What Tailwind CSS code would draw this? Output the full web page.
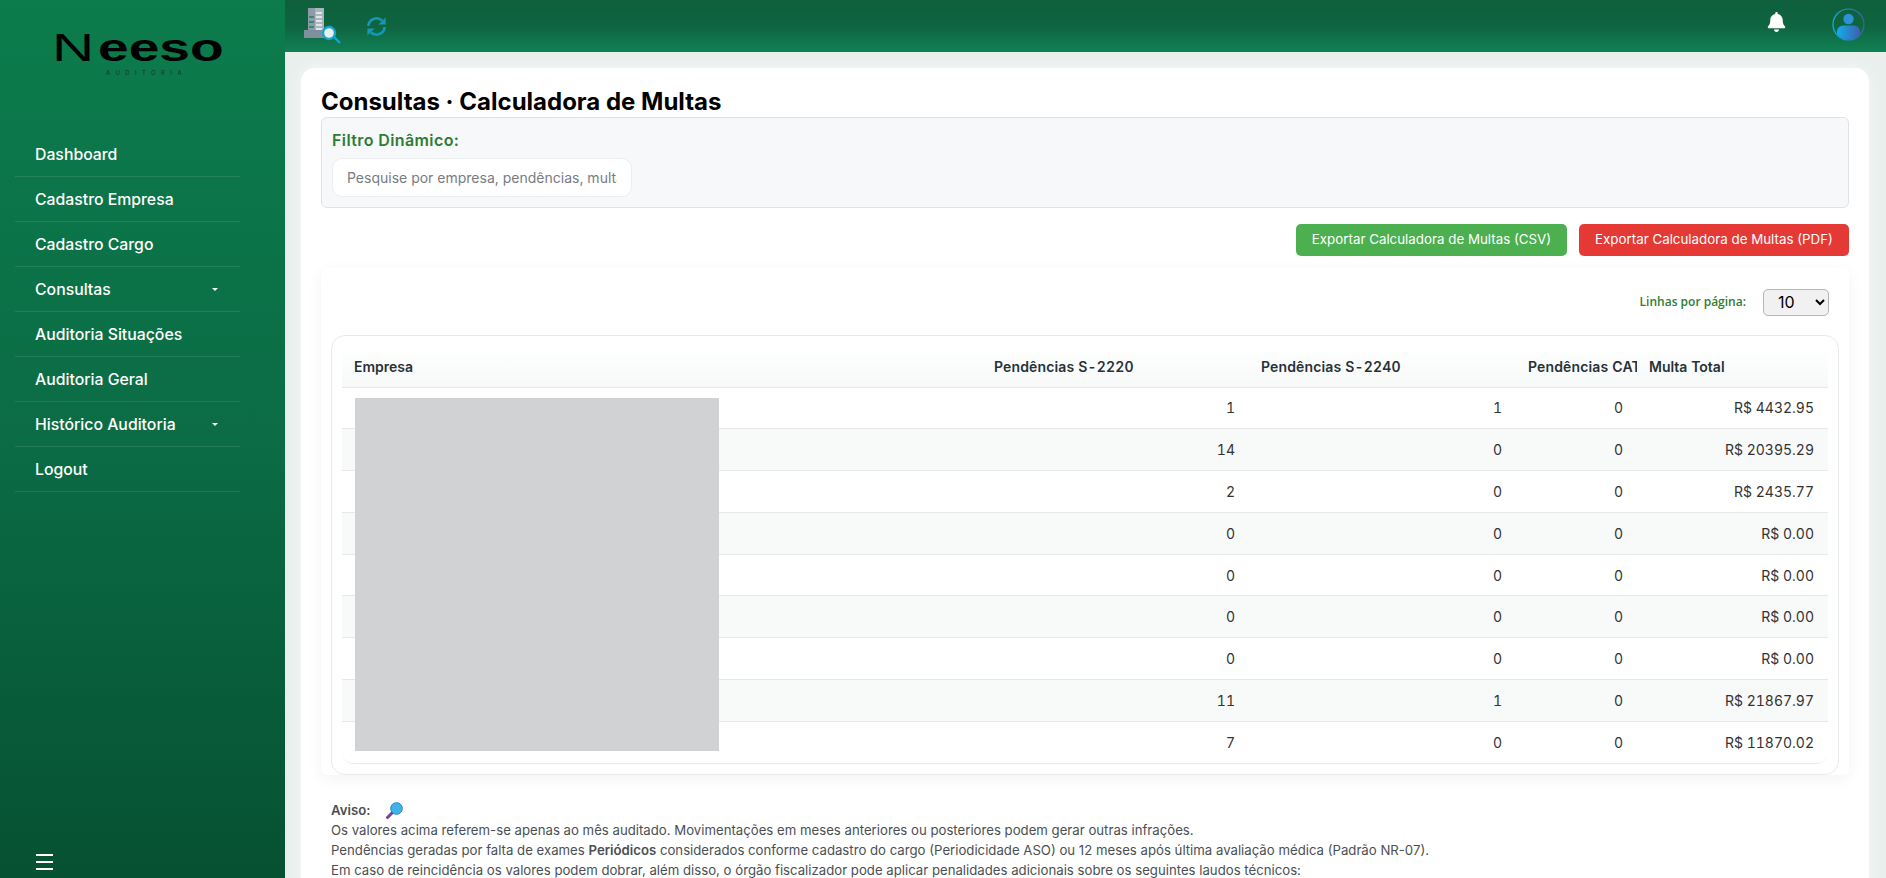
<!DOCTYPE html>
<html lang="pt-BR">
<head>
<meta charset="UTF-8">
<title>Neeso Auditoria</title>
<script src="https://cdn.jsdelivr.net/npm/@tailwindcss/browser@4"></script>
</head>
<body class="h-screen overflow-hidden bg-[#e8efec] font-['Inter',sans-serif]">
<div class="flex h-screen">
  <!-- sidebar -->
  <aside class="flex h-screen w-[285px] shrink-0 flex-col bg-gradient-to-b from-[#0c7c4c] via-[#0b6c45] to-[#065132] text-white">
    <div class="h-[132px] pl-[56px] pt-[34px] text-black">
      <div class="flex h-[28px] items-end font-['Liberation_Sans',sans-serif]">
        <span class="ml-[-4px] block w-[46px] origin-bottom-left scale-x-[1.5] text-[39px] leading-[28px]">N</span>
        <span class="block w-[127px] origin-bottom-left scale-x-[1.45] whitespace-nowrap text-[38px] font-bold leading-[28px]">eeso</span>
      </div>
      <div class="ml-[50px] mt-[7px] whitespace-nowrap text-[6px] leading-[8px] tracking-[5.4px] text-[#16352a]">AUDITORIA</div>
    </div>
    <nav class="flex w-[255px] flex-col px-[15px] text-[15.8px] font-medium">
      <a class="flex h-[45px] items-center border-b border-white/10 pl-[20px] pt-[1px]">Dashboard</a>
      <a class="flex h-[45px] items-center border-b border-white/10 pl-[20px] pt-[1px]">Cadastro Empresa</a>
      <a class="flex h-[45px] items-center border-b border-white/10 pl-[20px] pt-[1px]">Cadastro Cargo</a>
      <a class="flex h-[45px] items-center justify-between border-b border-white/10 pl-[20px] pr-[22px] pt-[1px]">Consultas<span class="border-x-[3px] border-t-[3px] border-x-transparent border-t-white"></span></a>
      <a class="flex h-[45px] items-center border-b border-white/10 pl-[20px] pt-[1px]">Auditoria Situações</a>
      <a class="flex h-[45px] items-center border-b border-white/10 pl-[20px] pt-[1px]">Auditoria Geral</a>
      <a class="flex h-[45px] items-center justify-between border-b border-white/10 pl-[20px] pr-[22px] pt-[1px]">Histórico Auditoria<span class="border-x-[3px] border-t-[3px] border-x-transparent border-t-white"></span></a>
      <a class="flex h-[45px] items-center border-b border-white/10 pl-[20px] pt-[1px]">Logout</a>
    </nav>
    <div class="mt-auto flex h-[24px] flex-col gap-[5px] pl-[36px]">
      <span class="h-[2px] w-[17px] bg-white"></span>
      <span class="h-[2px] w-[17px] bg-white"></span>
      <span class="h-[2px] w-[17px] bg-white"></span>
    </div>
  </aside>

  <div class="flex min-w-0 flex-1 flex-col">
    <!-- topbar -->
    <header class="flex h-[52px] shrink-0 items-center bg-gradient-to-b from-[#0f5f3c] via-[#0e6540] to-[#118056] pl-[19px] pr-[21px]">
      <svg class="h-[36px] w-[37px]" viewBox="0 0 37 36">
        <rect x="4" y="0" width="16" height="30" fill="#8d9ca8"/>
        <rect x="11" y="0" width="9" height="30" fill="#a9b4bd"/>
        <g fill="#dfe5e9"><rect x="12" y="4" width="6" height="2"/><rect x="12" y="8" width="6" height="2"/><rect x="12" y="12" width="6" height="2"/><rect x="12" y="16" width="6" height="2"/><rect x="12" y="20" width="6" height="2"/></g>
        <g fill="#2f8f6a"><rect x="5" y="8" width="5" height="2"/><rect x="5" y="13" width="5" height="2"/><rect x="5" y="18" width="5" height="2"/></g>
        <rect x="0" y="22" width="22" height="8" fill="#7f8f9c"/>
        <line x1="30" y1="29" x2="36" y2="35" stroke="#16a6cc" stroke-width="2.4"/>
        <circle cx="25" cy="25" r="6" fill="#e9eef0" stroke="#16a6cc" stroke-width="2.4"/>
      </svg>
      <svg class="ml-[24px] h-[23px] w-[23px]" viewBox="0 0 24 24" fill="#1597b8">
        <path d="M3.500 11.500a8.500 8.500 0 0 1 14.500-5.500" fill="none" stroke="#1597b8" stroke-width="2.800"/>
        <path d="M21.500 2.500v7.500h-7.500z"/>
        <path d="M20.500 12.500a8.500 8.500 0 0 1-14.500 5.500" fill="none" stroke="#1597b8" stroke-width="2.800"/>
        <path d="M2.500 21.500v-7.500h7.500z"/>
      </svg>
      <svg class="mb-[8px] ml-auto h-[20px] w-[19px]" viewBox="0 0 448 512" fill="#fff"><path d="M224 512c35.32 0 63.97-28.65 63.97-64H160.03c0 35.35 28.65 64 63.97 64zm215.39-149.71c-19.32-20.76-55.47-51.99-55.47-154.29 0-77.7-54.48-139.9-127.94-155.16V32c0-17.67-14.32-32-31.98-32s-31.98 14.33-31.98 32v20.84C118.56 68.1 64.08 130.3 64.08 208c0 102.3-36.15 133.53-55.47 154.29-6 6.45-8.66 14.16-8.61 21.71.11 16.4 12.98 32 32.1 32h383.8c19.12 0 32-15.6 32.1-32 .05-7.55-2.61-15.27-8.61-21.71z"/></svg>
      <svg class="ml-[46px] mt-[-4px] h-[33px] w-[33px]" viewBox="0 0 33 33">
        <defs>
          <linearGradient id="av" x1="0" x2="1" y1="0" y2="0"><stop offset="0" stop-color="#12aee8"/><stop offset="1" stop-color="#3f5fae"/></linearGradient>
          <clipPath id="avc"><circle cx="16.5" cy="16.5" r="15"/></clipPath>
        </defs>
        <circle cx="16.5" cy="16.5" r="15.5" fill="none" stroke="url(#av)" stroke-width="1.2"/>
        <circle cx="16.5" cy="11" r="5.2" fill="#2c92d6"/>
        <path clip-path="url(#avc)" d="M5 33V24c0-4 3-6.500 6.500-6.500h10c3.500 0 6.500 2.500 6.500 6.500v9z" fill="url(#av)"/>
      </svg>
    </header>

    <!-- main -->
    <main class="min-h-0 flex-1 overflow-hidden pl-[16px] pr-[17px] pt-[16px]">
      <div class="h-[900px] rounded-t-[14px] bg-white pl-[20px] pr-[20px] pt-[19px] shadow-[0_0_16px_rgba(255,255,255,0.7)]">
        <h1 class="text-[24px] font-bold leading-[30px] text-black">Consultas · Calculadora de Multas</h1>

        <section class="h-[91px] rounded-[6px] border border-[#dfe3e8] bg-[#f7f8fa] pl-[10px] pt-[11px]">
          <h2 class="text-[16px] font-semibold leading-[22px] tracking-[0.4px] text-[#2e7d32]">Filtro Dinâmico:</h2>
          <input class="mt-[7px] h-[39px] w-[300px] rounded-[10px] border border-[#eceef1] bg-white px-[14px] text-[14px] placeholder:text-[#777c82]" placeholder="Pesquise por empresa, pendências, multas">
        </section>

        <div class="mt-[16px] flex justify-end gap-[12px] text-[13.33px] text-white">
          <button class="h-[32px] w-[271px] rounded-[5px] bg-[#4caf50]">Exportar Calculadora de Multas (CSV)</button>
          <button class="h-[32px] w-[270px] rounded-[5px] bg-[#e53935]">Exportar Calculadora de Multas (PDF)</button>
        </div>

        <section class="relative mt-[12px] rounded-[6px] px-[10px] shadow-[0_4px_16px_rgba(0,0,0,0.05)]">
          <div class="flex h-[67px] items-center justify-end pb-[1px] pr-[10px] pt-[2px]">
            <label class="font-['Open_Sans',sans-serif] text-[12px] font-semibold text-[#2e7d32]">Linhas por página:</label>
            <select class="ml-[17px] h-[27px] w-[66px] rounded-[5px] border border-[#b5b5b5] bg-[#f1f1f1] pl-[10px] text-[16px] text-black"><option>10</option></select>
          </div>

          <div class="rounded-[14px] border border-[#e7ebe9] px-[10px] pb-[10px] pt-[10px]">
            <div class="overflow-hidden rounded-b-[12px] border-b border-[#e7ebe9]">
              <table class="w-[1486px] table-fixed border-collapse text-[14px] tabular-nums text-[#333]">
                <colgroup>
                  <col class="w-[640px]"><col class="w-[267px]"><col class="w-[267px]"><col class="w-[121px]"><col class="w-[191px]">
                </colgroup>
                <thead class="bg-gradient-to-b from-white to-[#f7f9f9] text-[#263238]">
                  <tr class="h-[41px] border-b border-[#e6e9e8]">
                    <th class="overflow-hidden whitespace-nowrap pl-[12px] text-left font-semibold">Empresa</th>
                    <th class="overflow-hidden whitespace-nowrap pl-[12px] text-left font-semibold tracking-[0.15px]">Pendências S-2220</th>
                    <th class="overflow-hidden whitespace-nowrap pl-[12px] text-left font-semibold tracking-[0.15px]">Pendências S-2240</th>
                    <th class="overflow-hidden whitespace-nowrap pl-[12px] text-left font-semibold tracking-[0.15px]">Pendências CAT</th>
                    <th class="overflow-hidden whitespace-nowrap pl-[12px] text-left font-semibold">Multa Total</th>
                  </tr>
                </thead>
                <tbody class="text-right">
                  <tr class="h-[41.8px] border-b border-[#e6e9e8] bg-white"><td></td><td class="pr-[14px]">1</td><td class="pr-[14px]">1</td><td class="pr-[14px]">0</td><td class="pr-[14px]">R$ 4432.95</td></tr>
                  <tr class="h-[41.8px] border-b border-[#e6e9e8] bg-[#f8f9f9]"><td></td><td class="pr-[14px]">14</td><td class="pr-[14px]">0</td><td class="pr-[14px]">0</td><td class="pr-[14px]">R$ 20395.29</td></tr>
                  <tr class="h-[41.8px] border-b border-[#e6e9e8] bg-white"><td></td><td class="pr-[14px]">2</td><td class="pr-[14px]">0</td><td class="pr-[14px]">0</td><td class="pr-[14px]">R$ 2435.77</td></tr>
                  <tr class="h-[41.8px] border-b border-[#e6e9e8] bg-[#f8f9f9]"><td></td><td class="pr-[14px]">0</td><td class="pr-[14px]">0</td><td class="pr-[14px]">0</td><td class="pr-[14px]">R$ 0.00</td></tr>
                  <tr class="h-[41.8px] border-b border-[#e6e9e8] bg-white"><td></td><td class="pr-[14px]">0</td><td class="pr-[14px]">0</td><td class="pr-[14px]">0</td><td class="pr-[14px]">R$ 0.00</td></tr>
                  <tr class="h-[41.8px] border-b border-[#e6e9e8] bg-[#f8f9f9]"><td></td><td class="pr-[14px]">0</td><td class="pr-[14px]">0</td><td class="pr-[14px]">0</td><td class="pr-[14px]">R$ 0.00</td></tr>
                  <tr class="h-[41.8px] border-b border-[#e6e9e8] bg-white"><td></td><td class="pr-[14px]">0</td><td class="pr-[14px]">0</td><td class="pr-[14px]">0</td><td class="pr-[14px]">R$ 0.00</td></tr>
                  <tr class="h-[41.8px] border-b border-[#e6e9e8] bg-[#f8f9f9]"><td></td><td class="pr-[14px]">11</td><td class="pr-[14px]">1</td><td class="pr-[14px]">0</td><td class="pr-[14px]">R$ 21867.97</td></tr>
                  <tr class="h-[41.8px] bg-white"><td></td><td class="pr-[14px]">7</td><td class="pr-[14px]">0</td><td class="pr-[14px]">0</td><td class="pr-[14px]">R$ 11870.02</td></tr>
                </tbody>
              </table>
            </div>
          </div>
          <!-- redacted company names -->
          <div class="absolute left-[34px] top-[130px] h-[353px] w-[364px] bg-[#d1d2d4]"></div>
        </section>

        <section class="mt-[25px] pl-[10px] text-[13.2px] leading-[20px] text-[#4a4f54]">
          <p class="flex items-center font-semibold">Aviso:
            <svg class="ml-[16px] h-[17px] w-[17px]" viewBox="0 0 17 17">
              <line x1="6" y1="11" x2="1.500" y2="15.500" stroke="#7a3f98" stroke-width="3" stroke-linecap="round"/>
              <circle cx="10.500" cy="6.500" r="5.800" fill="#3fb4ea" stroke="#2a7fb8" stroke-width="1"/>
            </svg>
          </p>
          <p>Os valores acima referem-se apenas ao mês auditado. Movimentações em meses anteriores ou posteriores podem gerar outras infrações.</p>
          <p>Pendências geradas por falta de exames <strong class="font-semibold">Periódicos</strong> considerados conforme cadastro do cargo (Periodicidade ASO) ou 12 meses após última avaliação médica (Padrão NR-07).</p>
          <p>Em caso de reincidência os valores podem dobrar, além disso, o órgão fiscalizador pode aplicar penalidades adicionais sobre os seguintes laudos técnicos:</p>
        </section>
      </div>
    </main>
  </div>
</div>
</body>
</html>
